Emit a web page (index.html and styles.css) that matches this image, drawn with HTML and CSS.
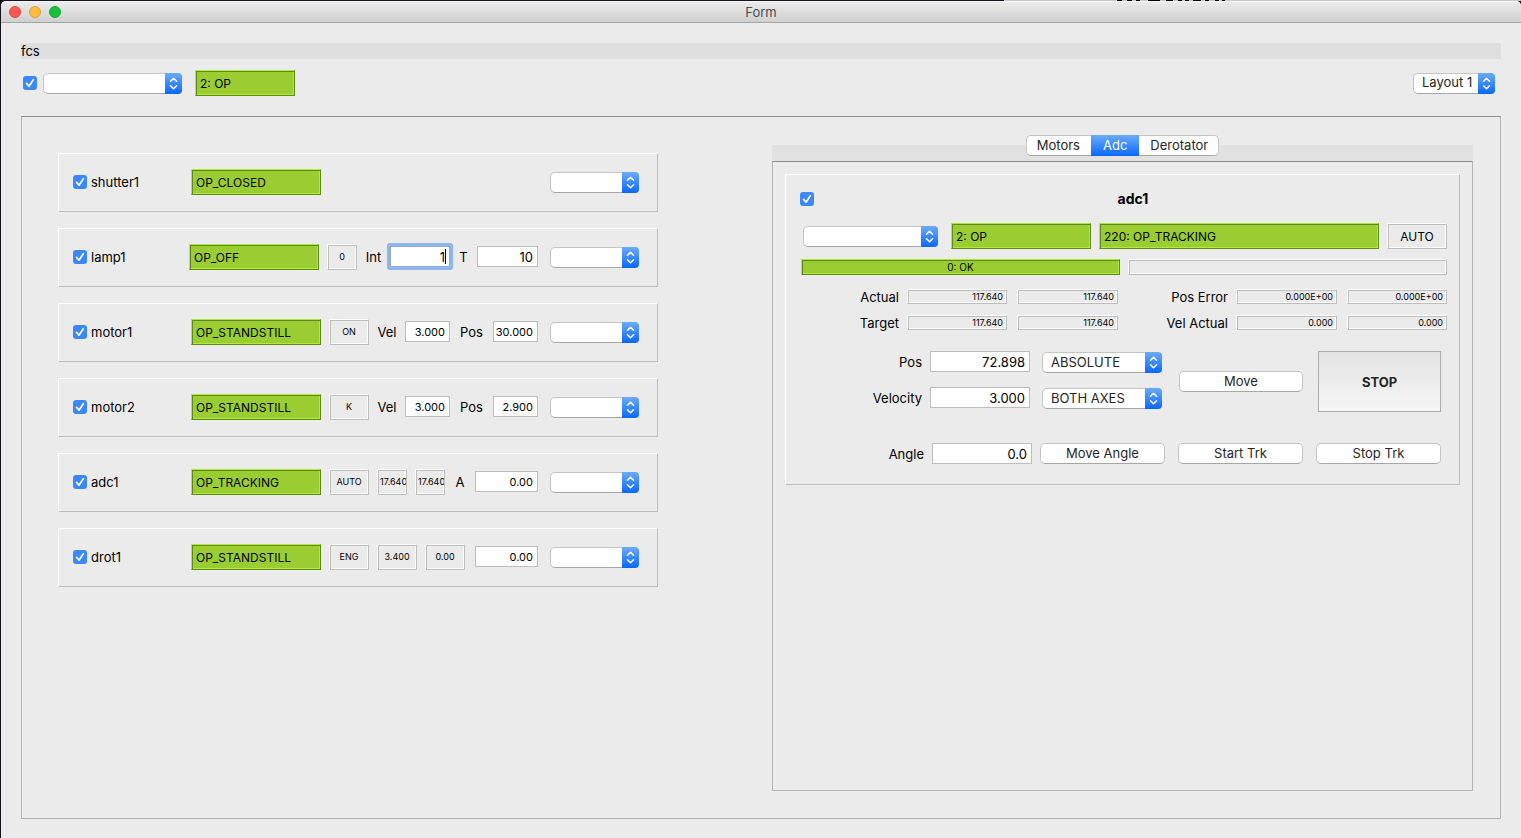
FILE: index.html
```html
<!DOCTYPE html>
<html lang="en">
<head>
<meta charset="utf-8">
<title>Form</title>
<link rel="stylesheet" href="styles.css">
</head>
<body>
<div class="desktop-edge"><svg width="110" height="1" viewBox="0 0 110 1" aria-hidden="true"><path d="M0 .5h5M10 .5h5M19 .5h4M31 .5h12M49 .5h7M61 .5h4M68 .5h4M76 .5h8M88 .5h4M98 .5h4M105 .5h3" stroke="#000" fill="none"/></svg></div>
<div class="window">
  <header class="titlebar">
    <div class="lights">
      <button class="light close" aria-label="Close"></button>
      <button class="light minimize" aria-label="Minimize"></button>
      <button class="light zoom" aria-label="Zoom"></button>
    </div>
    <h1 class="title">Form</h1>
  </header>
  <main class="content">
    <h2 class="server-name">fcs</h2>
    <div class="toolbar">
      <input type="checkbox" class="check" checked aria-label="fcs enabled">
      <span class="combo combo-server"><select aria-label="fcs command"><option></option></select></span>
      <output class="status status-server">2: OP</output>
      <span class="combo combo-layout"><select aria-label="Layout"><option>Layout 1</option></select></span>
    </div>

    <div class="workspace">
      <section class="devices">
        <div class="device">
          <label class="device-name"><input type="checkbox" class="check" checked>shutter1</label>
          <output class="status">OP_CLOSED</output>
          <span class="combo combo-device"><select aria-label="shutter1 command"><option></option></select></span>
        </div>
        <div class="device">
          <label class="device-name device-name-lamp"><input type="checkbox" class="check" checked>lamp1</label>
          <output class="status">OP_OFF</output>
          <output class="readout w30">0</output>
          <label class="field-name w17" for="lamp-int">Int</label>
          <span class="edit focused w60"><input id="lamp-int" type="text" class="box large" value="1"></span>
          <label class="field-name w11" for="lamp-t">T</label>
          <input id="lamp-t" type="text" class="box large w61" value="10">
          <span class="combo combo-device"><select aria-label="lamp1 command"><option></option></select></span>
        </div>
        <div class="device">
          <label class="device-name"><input type="checkbox" class="check" checked>motor1</label>
          <output class="status">OP_STANDSTILL</output>
          <output class="readout w40">ON</output>
          <label class="field-name w20" for="m1-vel">Vel</label>
          <input id="m1-vel" type="text" class="box w45" value="3.000">
          <label class="field-name w27" for="m1-pos">Pos</label>
          <input id="m1-pos" type="text" class="box w45" value="30.000">
          <span class="combo combo-device"><select aria-label="motor1 command"><option></option></select></span>
        </div>
        <div class="device">
          <label class="device-name"><input type="checkbox" class="check" checked>motor2</label>
          <output class="status">OP_STANDSTILL</output>
          <output class="readout w40">K</output>
          <label class="field-name w20" for="m2-vel">Vel</label>
          <input id="m2-vel" type="text" class="box w45" value="3.000">
          <label class="field-name w27" for="m2-pos">Pos</label>
          <input id="m2-pos" type="text" class="box w45" value="2.900">
          <span class="combo combo-device"><select aria-label="motor2 command"><option></option></select></span>
        </div>
        <div class="device">
          <label class="device-name"><input type="checkbox" class="check" checked>adc1</label>
          <output class="status">OP_TRACKING</output>
          <output class="readout w40">AUTO</output>
          <output class="readout clipped w30">17.640</output>
          <output class="readout clipped w30">17.640</output>
          <label class="field-name w14" for="adc-angle">A</label>
          <input id="adc-angle" type="text" class="box w63" value="0.00">
          <span class="combo combo-device"><select aria-label="adc1 command"><option></option></select></span>
        </div>
        <div class="device">
          <label class="device-name"><input type="checkbox" class="check" checked>drot1</label>
          <output class="status">OP_STANDSTILL</output>
          <output class="readout w40">ENG</output>
          <output class="readout w40">3.400</output>
          <output class="readout w40">0.00</output>
          <input type="text" class="box w63 push" value="0.00" aria-label="drot1 angle">
          <span class="combo combo-device"><select aria-label="drot1 command"><option></option></select></span>
        </div>
      </section>

      <section class="details">
        <div class="tabbar">
          <div class="tabs" role="tablist">
            <button class="tab" role="tab" aria-selected="false">Motors</button>
            <button class="tab" role="tab" aria-selected="true">Adc</button>
            <button class="tab" role="tab" aria-selected="false">Derotator</button>
          </div>
        </div>
        <div class="tabpage" role="tabpanel">
          <div class="group">
            <div class="group-head">
              <input type="checkbox" class="check" checked aria-label="adc1 enabled">
              <h3 class="group-title">adc1</h3>
            </div>
            <div class="state-row">
              <span class="combo combo-state"><select aria-label="adc1 state command"><option></option></select></span>
              <output class="status status-op">2: OP</output>
              <output class="status status-sub">220: OP_TRACKING</output>
              <output class="readout mode">AUTO</output>
            </div>
            <div class="message-row">
              <output class="status message">0: OK</output>
              <output class="readout message"></output>
            </div>
            <div class="values">
              <span class="value-name">Actual</span>
              <output class="readout value">117.640</output>
              <output class="readout value second">117.640</output>
              <span class="value-name">Pos Error</span>
              <output class="readout value">0.000E+00</output>
              <output class="readout value second">0.000E+00</output>
              <span class="value-name">Target</span>
              <output class="readout value">117.640</output>
              <output class="readout value second">117.640</output>
              <span class="value-name">Vel Actual</span>
              <output class="readout value">0.000</output>
              <output class="readout value second">0.000</output>
            </div>
            <div class="motion">
              <div class="motion-form">
                <label for="pos">Pos</label>
                <input id="pos" type="text" class="box large" value="72.898">
                <span class="combo"><select aria-label="Position mode"><option>ABSOLUTE</option></select></span>
                <label for="velocity">Velocity</label>
                <input id="velocity" type="text" class="box large" value="3.000">
                <span class="combo"><select aria-label="Axes"><option>BOTH AXES</option></select></span>
              </div>
              <button class="push-button move">Move</button>
              <button class="stop-button">STOP</button>
            </div>
            <div class="angle-row">
              <label for="angle">Angle</label>
              <input id="angle" type="text" class="box large" value="0.0">
              <button class="push-button">Move Angle</button>
              <button class="push-button">Start Trk</button>
              <button class="push-button">Stop Trk</button>
            </div>
          </div>
        </div>
      </section>
    </div>
  </main>
</div>
</body>
</html>
```
FILE: styles.css
```css
* {
  box-sizing: border-box;
}

body {
  margin: 0;
  min-height: 100vh;
  display: flex;
  flex-direction: column;
  background: #17131c;
  color: #000;
  font: 13px/16px Inter, "Liberation Sans", sans-serif;
}

button,
input,
select {
  font: inherit;
  color: inherit;
  margin: 0;
}

h1,
h2,
h3 {
  margin: 0;
  font-size: inherit;
  font-weight: 400;
}

/* window frame */
.desktop-edge {
  height: 1px;
  padding-left: 1117px;
  background: linear-gradient(90deg, #17131c 66%, #c9c9c9 66%);
}

.desktop-edge svg {
  display: block;
}

.window {
  flex: 1;
  display: flex;
  flex-direction: column;
  margin-left: 1px;
  background: #ebebeb;
  border-radius: 5px 5px 0 0;
}

.titlebar {
  display: grid;
  grid-template-columns: 1fr auto 1fr;
  align-items: center;
  height: 22px;
  padding: 0 8px;
  background: linear-gradient(#ebebeb, #d0d0d0);
  border-top: 1px solid #f6f6f6;
  border-bottom: 1px solid #a5a5a5;
  border-radius: 5px 5px 0 0;
}

.lights {
  display: flex;
  gap: 8px;
}

.light {
  width: 12px;
  height: 12px;
  padding: 0;
  border: 1px solid;
  border-radius: 50%;
}

.close {
  background: #fc5753;
  border-color: #df4744;
}

.minimize {
  background: #fdbc40;
  border-color: #de9f34;
}

.zoom {
  background: #15c03c;
  border-color: #12a933;
}

.title {
  color: #4b4b4b;
}

.content {
  flex: 1;
  display: flex;
  flex-direction: column;
  padding: 20px 20px 19px;
}

.server-name {
  background: #dfdfdf;
}

.toolbar {
  display: flex;
  align-items: center;
  height: 26px;
  margin: 11px 6px 20px 2px;
}

/* controls */
.check {
  appearance: none;
  flex: none;
  width: 14px;
  height: 14px;
  border-radius: 3px;
  background: #3b88fd url("data:image/svg+xml,%3Csvg xmlns='http://www.w3.org/2000/svg' viewBox='0 0 14 14'%3E%3Cpath d='M3.6 7.4 6 10.2 10.4 3.6' fill='none' stroke='white' stroke-width='1.7' stroke-linecap='round' stroke-linejoin='round'/%3E%3C/svg%3E");
}

.combo {
  position: relative;
  flex: none;
  display: flex;
  height: 21px;
}

.combo select {
  appearance: none;
  width: 100%;
  height: 21px;
  padding: 0 20px 2px 8px;
  color: #262626;
  background: #fff;
  border: 1px solid #c4c4c4;
  border-bottom-color: #a6a6a6;
  border-radius: 5px;
}

.combo::after {
  content: "";
  position: absolute;
  top: 0;
  right: 0;
  width: 17px;
  height: 21px;
  border-radius: 0 4px 4px 0;
  background: url("data:image/svg+xml,%3Csvg xmlns='http://www.w3.org/2000/svg' viewBox='0 0 17 21'%3E%3Cpath d='M5.5 8.3 8.5 5.3 11.5 8.3M5.5 12.7 8.5 15.7 11.5 12.7' fill='none' stroke='white' stroke-width='1.5' stroke-linecap='round' stroke-linejoin='round'/%3E%3C/svg%3E"), linear-gradient(#6cabf9, #0a68ff);
  pointer-events: none;
}

.combo-server {
  width: 139px;
  margin-left: 6px;
}

.combo-layout {
  width: 82px;
  margin-left: auto;
}

.combo-device {
  width: 89px;
}

.status,
.readout {
  flex: none;
  display: flex;
  align-items: center;
  height: 26px;
  overflow: hidden;
  white-space: nowrap;
}

.status {
  width: 130px;
  padding: 1px 4px 0;
  font-size: 12px;
  background: #9acd32;
  border: 1px solid;
  border-color: #aeea39 #5f8a16 #5f8a16 #aeea39;
  box-shadow: inset 1px 1px #5f8a16, inset -1px -1px #aeea39;
}

.status-server {
  width: 100px;
  margin-left: 13px;
}

.readout {
  justify-content: center;
  font-size: 9px;
  border: 1px solid;
  border-color: #fff #bdbdbd #bdbdbd #fff;
  box-shadow: inset 1px 1px #bdbdbd, inset -1px -1px #fff;
}

.readout.clipped {
  justify-content: flex-start;
  padding-left: 2px;
}

.box {
  width: 100%;
  height: 21px;
  padding: 0 4px 0 1px;
  font-size: 11px;
  text-align: right;
  background: #fff;
  border: 1px solid #bdbdbd;
  border-radius: 0;
  outline: 0;
}

.box.large {
  font-size: 13px;
}

.edit {
  position: relative;
  display: flex;
}

.focused .box {
  border-color: #93abcf;
  border-radius: 1px;
  box-shadow: 0 0 0 3px #8fb5ee;
}

.focused::after {
  content: "";
  position: absolute;
  top: 3px;
  right: 4px;
  width: 1px;
  height: 15px;
  background: #000;
}

.w11 { width: 11px; }
.w14 { width: 14px; }
.w17 { width: 17px; }
.w20 { width: 20px; }
.w27 { width: 27px; }
.w30 { width: 30px; }
.w40 { width: 40px; }
.w45 { width: 45px; }
.w60 { width: 60px; }
.w61 { width: 61px; }
.w63 { width: 63px; }

.push-button {
  height: 21px;
  padding: 0 0 1px;
  color: #262626;
  background: #fff;
  border: 1px solid #c4c4c4;
  border-bottom-color: #a6a6a6;
  border-radius: 5px;
}

.stop-button {
  width: 123px;
  height: 61px;
  padding: 0;
  font-weight: 700;
  color: #262626;
  background: linear-gradient(#e3e3e3, #f6f6f6);
  border: 1px solid #adadad;
}

/* workspace */
.workspace {
  flex: 1;
  display: grid;
  grid-template-columns: 600fr 701fr;
  column-gap: 114px;
  padding: 18px 27px 27px 36px;
  border: 1px solid #b4b4b4;
  border-top-color: #8e8e8e;
}

.devices {
  display: flex;
  flex-direction: column;
  gap: 16px;
  padding-top: 18px;
}

.device {
  display: flex;
  align-items: center;
  gap: 8px;
  height: 59px;
  padding: 0 18px 1px 14px;
  border: 1px solid;
  border-color: #fff #bdbdbd #bdbdbd #fff;
}

.device .combo-device {
  margin-top: 1px;
  margin-left: auto;
}

.device > .box,
.device > .edit {
  margin-bottom: 1px;
}

.device .push {
  margin-left: auto;
}

.device .box + .combo-device,
.device .edit + .combo-device {
  margin-left: 4px;
}

.device-name {
  display: flex;
  align-items: center;
  gap: 4px;
  width: 110px;
}

.device-name-lamp {
  width: 108px;
}

.field-name {
  text-align: center;
  white-space: nowrap;
}

/* tabs */
.details {
  display: flex;
  flex-direction: column;
}

.tabbar {
  display: flex;
  justify-content: center;
  height: 26px;
  background: linear-gradient(#ebebeb 10px, #e1e1e1 10px);
}

.tabs {
  display: flex;
  height: 21px;
}

.tab {
  padding: 0 11px 1px;
  color: #262626;
  background: #fff;
  border: 1px solid #c4c4c4;
  border-bottom-color: #a6a6a6;
  border-width: 1px 0;
}

.tab:first-child {
  padding-left: 10px;
  border-left-width: 1px;
  border-radius: 5px 0 0 5px;
}

.tab:last-child {
  padding-right: 10px;
  border-right-width: 1px;
  border-radius: 0 5px 5px 0;
}

.tab[aria-selected="true"] {
  padding: 0 12px 1px;
  color: #fff;
  background: linear-gradient(#6cabf9, #0a68ff);
  border: 0;
}

.tabpage {
  flex: 1;
  padding: 12px;
  border: 1px solid #b4b4b4;
  border-top-color: #8e8e8e;
}

/* detail group */
.group {
  padding: 16px 12px 20px 14px;
  border: 1px solid;
  border-color: #fff #bdbdbd #bdbdbd #fff;
}

.group-head {
  display: flex;
  align-items: center;
}

.group-title {
  flex: 1;
  padding-left: 5px;
  font-size: 14px;
  font-weight: 700;
  text-align: center;
}

.state-row {
  display: flex;
  align-items: center;
  gap: 8px;
  margin: 16px 0 10px 3px;
}

.combo-state {
  width: 135px;
  margin-right: 5px;
}

.status-op {
  width: 140px;
}

.status-sub {
  flex: 1;
}

.mode {
  width: 60px;
  padding-top: 1px;
  font-size: 12px;
}

.message-row {
  display: flex;
  gap: 8px;
  margin: 0 0 14px 1px;
}

.message {
  flex: 1;
  justify-content: center;
  height: 16px;
  padding: 0;
  font-size: 10px;
}

.values {
  display: grid;
  grid-template-columns: 106fr 100fr 111fr 118fr 101fr 110fr;
  row-gap: 11px;
  margin-left: 1px;
}

.value-name {
  height: 15px;
  padding-right: 8px;
  text-align: right;
}

.value {
  justify-content: flex-end;
  height: 15px;
  padding-right: 3px;
}

.value.second {
  margin-left: 10px;
}

.motion {
  display: flex;
  align-items: center;
  margin: 21px 6px 31px 0;
}

.motion-form {
  flex: 1;
  align-self: flex-start;
  display: grid;
  grid-template-columns: 1fr 100px 132px;
  grid-auto-rows: 22px;
  row-gap: 14px;
  align-items: center;
}

.motion-form label {
  padding-right: 8px;
  text-align: right;
}

.motion-form .box {
  align-self: start;
}

.motion-form .combo {
  align-self: end;
  margin-left: 12px;
}

.move {
  width: 124px;
  margin: 0 15px 1px 17px;
}

.angle-row {
  display: flex;
  align-items: center;
  margin-right: 6px;
}

.angle-row label {
  flex: 1;
  padding-right: 8px;
  text-align: right;
}

.angle-row .box {
  width: 100px;
  margin-right: 8px;
}

.angle-row .push-button {
  width: 125px;
}

.angle-row .push-button + .push-button {
  margin-left: 13px;
}
```
